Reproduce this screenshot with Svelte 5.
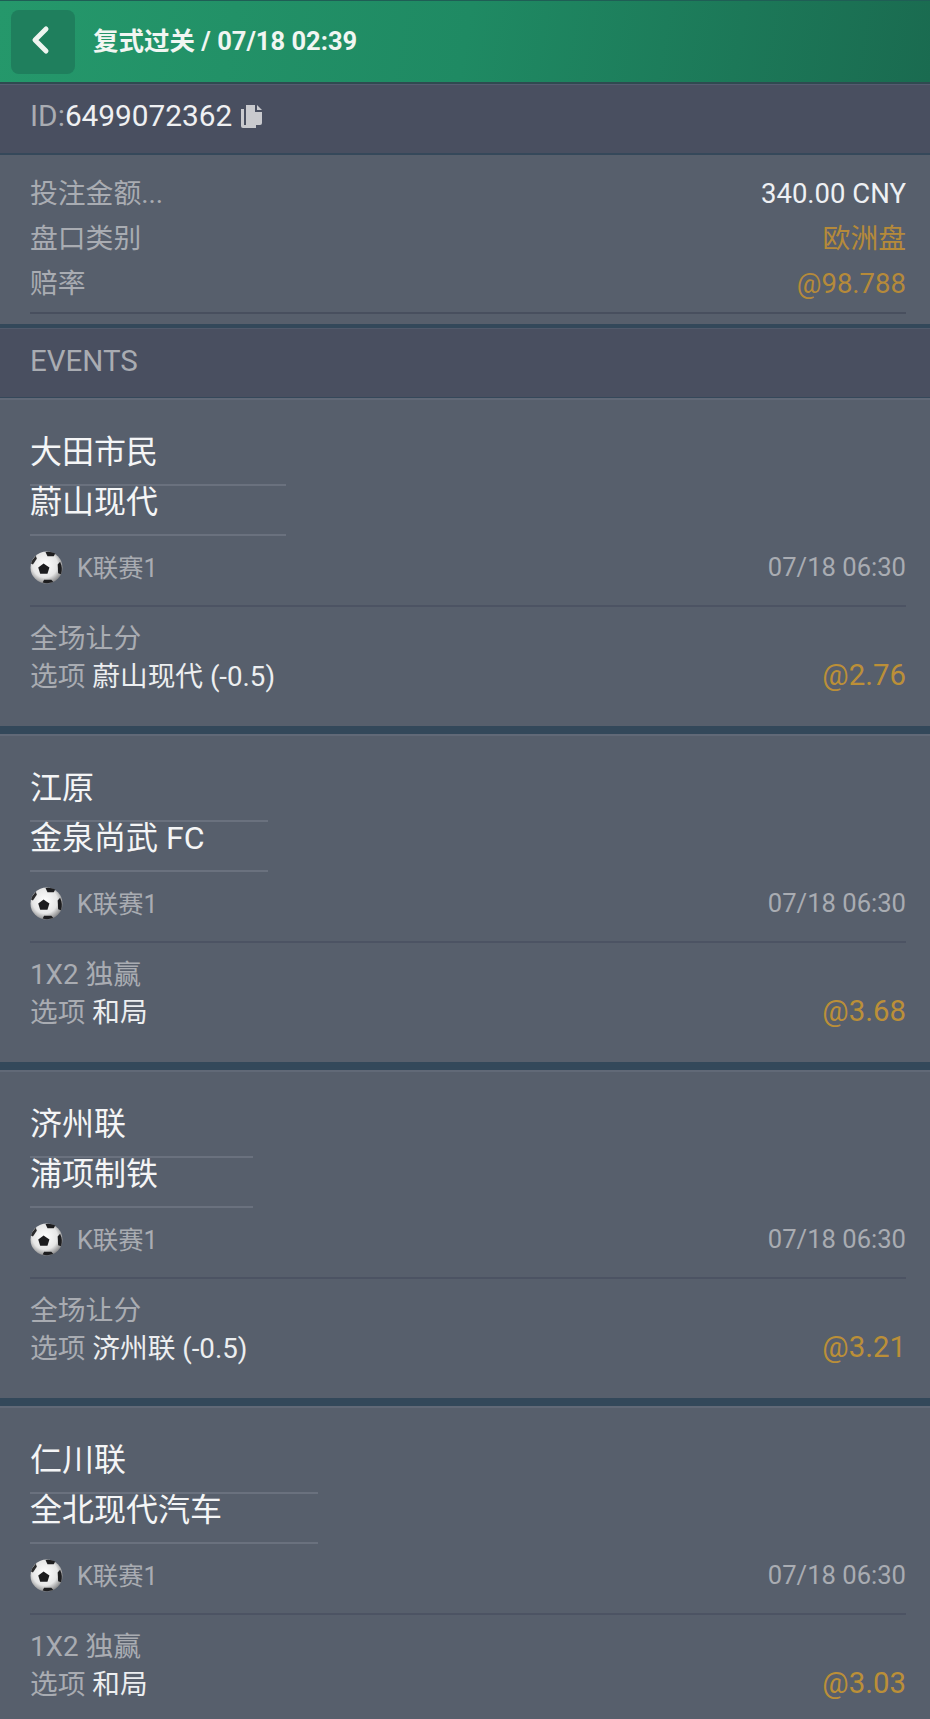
<script>
  // bet slip data
  const events = [
    { home: '大田市民', away: '蔚山现代', lineWidth: 256, market: '全场让分', pick: '蔚山现代 (-0.5)', odds: '@2.76' },
    { home: '江原', away: '金泉尚武 FC', lineWidth: 238, market: '1X2 独赢', pick: '和局', odds: '@3.68' },
    { home: '济州联', away: '浦项制铁', lineWidth: 223, market: '全场让分', pick: '济州联 (-0.5)', odds: '@3.21' },
    { home: '仁川联', away: '全北现代汽车', lineWidth: 288, market: '1X2 独赢', pick: '和局', odds: '@3.03' }
  ];
</script>

<div class="page">
  <header class="topbar">
    <button class="back" aria-label="back">
      <svg width="22" height="30" viewBox="0 0 22 30">
        <path d="M17 4 L6 15 L17 26" fill="none" stroke="#eef5f0" stroke-width="5" stroke-linecap="round" stroke-linejoin="round" />
      </svg>
    </button>
    <span class="title">复式过关 / 07/18 02:39</span>
  </header>

  <div class="band id-band">
    <span class="muted">ID:</span><span class="id">6499072362</span>
    <svg class="copy" width="23" height="25" viewBox="0 0 23 25">
      <path d="M1 5 H4 V21 H16 V24 H3 Q1 24 1 22 Z" fill="#c9cace" />
      <path d="M6 1 H15 V8 H22 V19 Q22 21 20 21 H6 Z" fill="#c9cace" />
      <path d="M17 1 L22 6 H17 Z" fill="#c9cace" />
    </svg>
  </div>

  <section class="summary">
    <div class="summary-rows">
      <div class="row"><span class="muted label">投注金额...</span><span class="white">340.00 CNY</span></div>
      <div class="row"><span class="muted label">盘口类别</span><span class="gold label">欧洲盘</span></div>
      <div class="row"><span class="muted label">赔率</span><span class="gold">@98.788</span></div>
    </div>
  </section>

  <div class="band events-band"><span class="muted">EVENTS</span></div>

  {#each events as ev}
    <section class="card">
      <div class="team" style="width: {ev.lineWidth}px">{ev.home}</div>
      <div class="team" style="width: {ev.lineWidth}px">{ev.away}</div>
      <div class="league">
        <div class="league-left">
          <svg class="ball" width="33" height="33" viewBox="0 0 34 34">
            <defs>
              <radialGradient id="shade" cx="45%" cy="42%" r="60%">
                <stop offset="0%" stop-color="#ffffff" />
                <stop offset="65%" stop-color="#e6e6e6" />
                <stop offset="100%" stop-color="#858586" />
              </radialGradient>
            </defs>
            <circle cx="17" cy="17" r="16.5" fill="url(#shade)" />
            <path d="M14 13 L20 17 L18 23.5 L10.5 23.5 L8.5 17 Z" fill="#1d1d1f" />
            <path d="M16 1 Q21 0 26 2.5 L24.5 5.5 L18 5.5 Z" fill="#1d1d1f" />
            <path d="M31 11 Q34 17 32 24 L29 23 L28.5 14 Z" fill="#1d1d1f" />
            <path d="M6 5 Q2 9 1 13 L3 14 L7 8 Z" fill="#2a2a2c" />
            <path d="M13 32.5 Q18 34 24 32 L22 29.5 L14.5 29.5 Z" fill="#1d1d1f" />
          </svg>
          <span class="muted small">K联赛1</span>
        </div>
        <span class="muted time">07/18 06:30</span>
      </div>
      <div class="bet">
        <div class="muted label">{ev.market}</div>
        <div class="bet-pick">
          <div class="pick-text"><span class="muted">选项</span> <span class="pick">{ev.pick}</span></div>
          <span class="gold odds">{ev.odds}</span>
        </div>
      </div>
    </section>
  {/each}
</div>

<style>
  :global(body) {
    background: #575f6c;
    overflow: hidden;
  }
  .page {
    width: 930px;
    height: 1719px;
    overflow: hidden;
    font-family: Roboto, "Noto Sans CJK SC", sans-serif;
    font-size: 27.5px;
    color: #fff;
  }
  /* top bar */
  .topbar {
    height: 81px;
    box-sizing: content-box;
    border-top: 1px solid #1f5e55;
    border-bottom: 2px solid #2f4a50;
    display: flex;
    align-items: center;
    background: linear-gradient(100deg, #25986b 0%, #1f8a63 50%, #1a6b50 100%);
  }
  .back {
    width: 64px;
    height: 64px;
    margin-left: 11px;
    padding: 0;
    border: none;
    border-radius: 8px;
    background: #1f7f5d;
    display: flex;
    align-items: center;
    justify-content: center;
    padding-right: 6px;
    padding-bottom: 3px;
    box-sizing: border-box;
  }
  .title {
    margin-left: 18px;
    font-size: 25.5px;
    font-weight: 700;
    color: #f1f6f2;
    position: relative;
    top: -3px;
  }
  /* dark bands */
  .band {
    background: #494f60;
    border-top: 1px solid #555b70;
    border-bottom: 2px solid #35485a;
    box-sizing: border-box;
    display: flex;
    align-items: center;
    padding: 0 30px;
  }
  .id-band {
    height: 71px;
    font-size: 29.8px;
    padding-bottom: 7px;
  }
  .id {
    color: #eff0f2;
  }
  .copy {
    margin-left: 8px;
    margin-top: 2px;
  }
  .events-band {
    height: 70px;
    font-size: 29.5px;
    border-top: 1px solid #525a6b;
    border-bottom-width: 1px;
    padding-bottom: 4px;
  }
  .muted {
    color: #a9acb2;
  }
  .white {
    color: #eef0f3;
  }
  .gold {
    color: #b58a3a;
  }
  .label {
    font-size: 27.8px;
  }
  /* summary */
  .summary {
    height: 173px;
    box-sizing: border-box;
    padding: 16px 24px 0 30px;
    border-bottom: 4px solid #33485a;
  }
  .summary-rows {
    border-bottom: 2px solid #484f5e;
    height: 143px;
    box-sizing: border-box;
  }
  .row {
    display: flex;
    justify-content: space-between;
    align-items: baseline;
    height: 45px;
    line-height: 45px;
  }
  /* event card */
  .card {
    height: 336px;
    box-sizing: border-box;
    padding: 36px 24px 0 30px;
    border-top: 2px solid #616977;
    border-bottom: 8px solid #33485a;
  }
  .team {
    height: 50px;
    line-height: 33px;
    font-size: 32px;
    border-bottom: 2px solid #6a717e;
    box-sizing: border-box;
    color: #f4f5f6;
    white-space: nowrap;
  }
  .league {
    display: flex;
    justify-content: space-between;
    align-items: center;
    height: 71px;
    border-bottom: 2px solid #4c5363;
    box-sizing: border-box;
    padding-bottom: 7px;
  }
  .league-left {
    display: flex;
    align-items: center;
    gap: 14px;
  }
  .small {
    font-size: 25.3px;
    margin-bottom: 2px;
  }
  .time {
    font-size: 25.6px;
  }
  .bet {
    padding-top: 12px;
  }
  .bet > .muted {
    height: 38px;
    line-height: 40px;
  }
  .bet-pick {
    display: flex;
    justify-content: space-between;
    align-items: center;
    height: 39px;
  }
  .pick-text {
    font-size: 27.7px;
    line-height: 39px;
  }
  .pick {
    color: #eceef0;
  }
  .odds {
    font-size: 29.4px;
    color: #bb8f38;
    margin-bottom: 4px;
  }
</style>
